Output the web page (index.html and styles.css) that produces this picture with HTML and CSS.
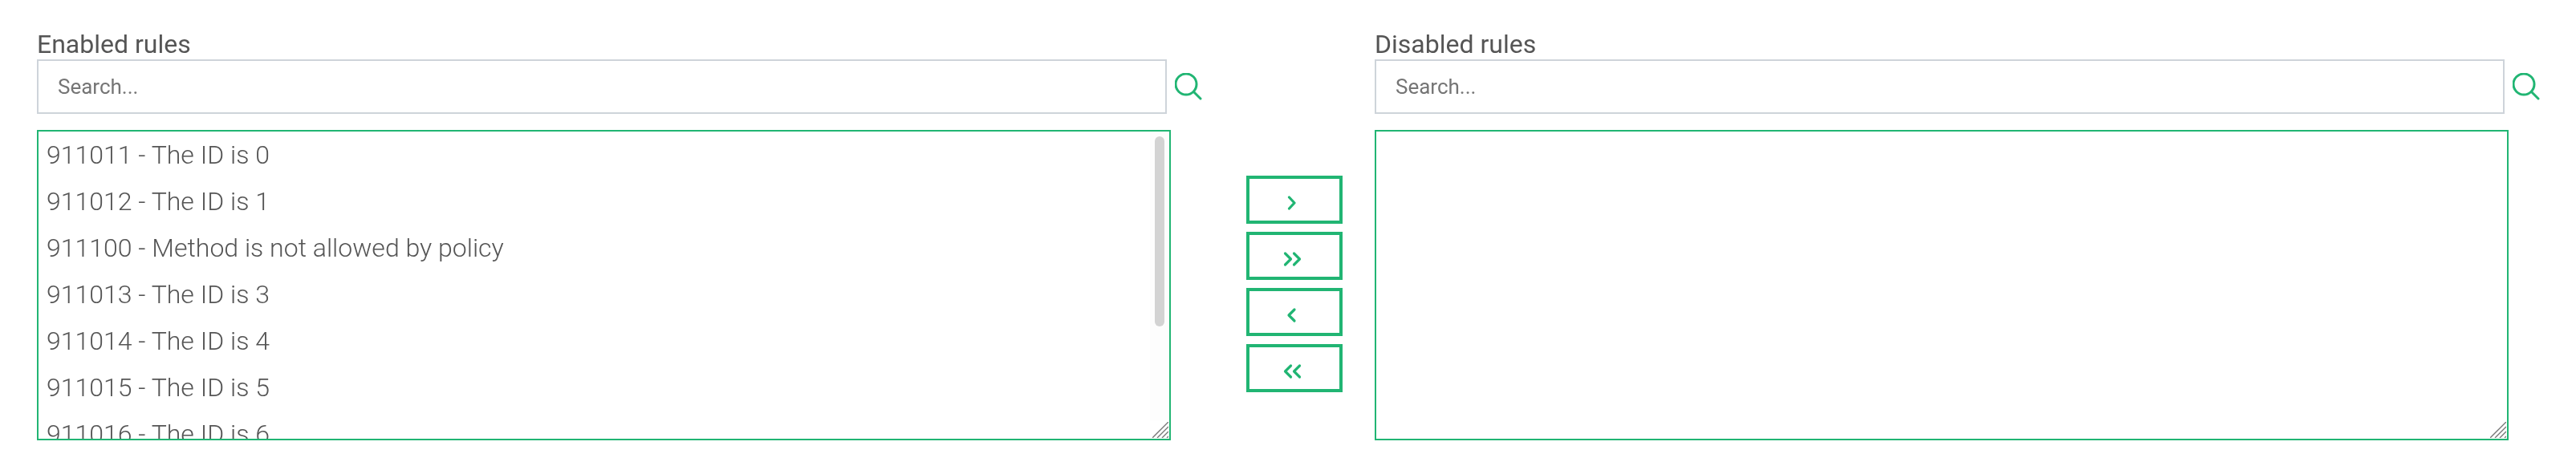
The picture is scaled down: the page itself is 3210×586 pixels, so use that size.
FILE: index.html
```html
<!DOCTYPE html>
<html lang="en">
<head>
    <meta charset="UTF-8">
    <title>Rules</title>
    <link rel="stylesheet" href="styles.css">
</head>
<body>
    <div class="picker">
        <div class="panel">
            <label class="panel-title" for="enabled-search">Enabled rules</label>
            <div class="search-row">
                <input class="search-input" id="enabled-search" type="text" placeholder="Search...">
                <svg class="search-icon" viewBox="0 0 34 34"><circle cx="14" cy="14" r="13"/><path d="M23.5 23.5 L32 32"/></svg>
            </div>
            <div class="rule-box">
                <ul class="rule-list">
                    <li>911011 - The ID is 0</li>
                    <li>911012 - The ID is 1</li>
                    <li>911100 - Method is not allowed by policy</li>
                    <li>911013 - The ID is 3</li>
                    <li>911014 - The ID is 4</li>
                    <li>911015 - The ID is 5</li>
                    <li>911016 - The ID is 6</li>
                </ul>
                <div class="scroll-track"><div class="scroll-thumb"></div></div>
                <svg class="resize-handle" viewBox="0 0 20 20"><path d="M0 20 L20 0 M6 20 L20 6 M12 20 L20 12 M18 20 L20 18"/></svg>
            </div>
        </div>

        <div class="move-buttons">
            <button type="button" class="move-button"><svg viewBox="0 0 28 20"><path d="M7.5 3 L14 10 L7.5 17"/></svg></button>
            <button type="button" class="move-button"><svg viewBox="0 0 28 20"><path d="M2.5 3 L9.5 10 L2.5 17"/><path d="M13.5 3 L20.5 10 L13.5 17"/></svg></button>
            <button type="button" class="move-button"><svg viewBox="0 0 28 20"><path d="M14 3 L7 10 L14 17"/></svg></button>
            <button type="button" class="move-button"><svg viewBox="0 0 28 20"><path d="M9.5 3 L2.5 10 L9.5 17"/><path d="M20.5 3 L13.5 10 L20.5 17"/></svg></button>
        </div>

        <div class="panel">
            <label class="panel-title" for="disabled-search">Disabled rules</label>
            <div class="search-row">
                <input class="search-input" id="disabled-search" type="text" placeholder="Search...">
                <svg class="search-icon" viewBox="0 0 34 34"><circle cx="14" cy="14" r="13"/><path d="M23.5 23.5 L32 32"/></svg>
            </div>
            <div class="rule-box">
                <ul class="rule-list"></ul>
                <svg class="resize-handle" viewBox="0 0 20 20"><path d="M0 20 L20 0 M6 20 L20 6 M12 20 L20 12 M18 20 L20 18"/></svg>
            </div>
        </div>
    </div>
</body>
</html>
```

FILE: styles.css
```css
body {
    margin: 0;
    background-color: white;
    font-family: Roboto, "Liberation Sans", sans-serif;
}

.picker {
    display: flex;
    padding: 36px 0 0 46px;
    will-change: transform;
}

.panel {
    flex: none;
    width: 1413px;
}

.panel-title {
    display: block;
    height: 38px;
    font-size: 32px;
    line-height: 38px;
    color: #555;
}

.search-row {
    display: flex;
    align-items: center;
    gap: 10px;
}

.search-input {
    flex: none;
    box-sizing: border-box;
    width: 1408px;
    height: 68px;
    padding: 0 24px;
    border: 2px solid #ced4da;
    outline: none;
    font-family: inherit;
    font-size: 26px;
    color: #555;
}

.search-input::placeholder {
    color: #757575;
}

.search-icon {
    flex: none;
    width: 34px;
    height: 34px;
    fill: none;
    stroke: #21b573;
    stroke-width: 3;
    stroke-linecap: round;
}

.rule-box {
    position: relative;
    box-sizing: border-box;
    width: 1413px;
    height: 387px;
    margin-top: 20px;
    border: 2px solid #21b573;
}

.rule-list {
    height: 100%;
    margin: 0;
    padding: 0;
    list-style: none;
    overflow: hidden;
    font-size: 32px;
    font-weight: 300;
    color: #555;
}

.rule-list li {
    padding: 10px;
    line-height: 38px;
}

.scroll-track {
    position: absolute;
    top: 0;
    right: 0;
    bottom: 23px;
    box-sizing: border-box;
    width: 24px;
    padding: 6px;
    background-color: #fdfdfd;
}

.scroll-thumb {
    height: 237px;
    border-radius: 6px;
    background-color: #d3d3d3;
}

.resize-handle {
    position: absolute;
    right: 1px;
    bottom: 1px;
    width: 20px;
    height: 20px;
    fill: none;
    stroke: #777;
    stroke-width: 1.4;
}

.move-buttons {
    display: flex;
    flex-direction: column;
    gap: 10px;
    margin: 183px 40px 0 94px;
}

.move-button {
    width: 120px;
    height: 60px;
    padding: 7px 0 0;
    border: 4px solid #21b573;
    background-color: white;
    line-height: 0;
}

.move-button svg {
    width: 28px;
    height: 20px;
    fill: none;
    stroke: #21b573;
    stroke-width: 3.2;
    stroke-linecap: round;
    stroke-linejoin: round;
}
```
